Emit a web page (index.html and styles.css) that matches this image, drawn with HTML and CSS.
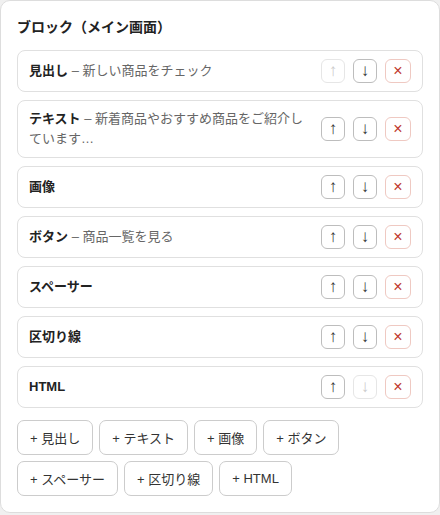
FILE: index.html
```html
<!DOCTYPE html>
<html>
<head>
	<meta charset="utf-8" />
	<title>ブロック</title>
	<link rel="stylesheet" href="styles.css">
</head>
<body>
	<div class="panel">
		<h3 class="panelTitle">ブロック（メイン画面）</h3>

		<div class="blockList">
			<div class="blockRow">
				<div class="blockText"><b>見出し</b><span class="sub"> – 新しい商品をチェック</span></div>
				<div class="actions">
					<button class="act" disabled>↑</button>
					<button class="act">↓</button>
					<button class="act del">×</button>
				</div>
			</div>
			<div class="blockRow">
				<div class="blockText"><b>テキスト</b><span class="sub"> – 新着商品やおすすめ商品をご紹介しています…</span></div>
				<div class="actions">
					<button class="act">↑</button>
					<button class="act">↓</button>
					<button class="act del">×</button>
				</div>
			</div>
			<div class="blockRow">
				<div class="blockText"><b>画像</b></div>
				<div class="actions">
					<button class="act">↑</button>
					<button class="act">↓</button>
					<button class="act del">×</button>
				</div>
			</div>
			<div class="blockRow">
				<div class="blockText"><b>ボタン</b><span class="sub"> – 商品一覧を見る</span></div>
				<div class="actions">
					<button class="act">↑</button>
					<button class="act">↓</button>
					<button class="act del">×</button>
				</div>
			</div>
			<div class="blockRow">
				<div class="blockText"><b>スペーサー</b></div>
				<div class="actions">
					<button class="act">↑</button>
					<button class="act">↓</button>
					<button class="act del">×</button>
				</div>
			</div>
			<div class="blockRow">
				<div class="blockText"><b>区切り線</b></div>
				<div class="actions">
					<button class="act">↑</button>
					<button class="act">↓</button>
					<button class="act del">×</button>
				</div>
			</div>
			<div class="blockRow">
				<div class="blockText"><b>HTML</b></div>
				<div class="actions">
					<button class="act">↑</button>
					<button class="act" disabled>↓</button>
					<button class="act del">×</button>
				</div>
			</div>
		</div>

		<div class="addList">
			<button class="addBtn">+ 見出し</button>
			<button class="addBtn">+ テキスト</button>
			<button class="addBtn">+ 画像</button>
			<button class="addBtn">+ ボタン</button>
			<button class="addBtn">+ スペーサー</button>
			<button class="addBtn">+ 区切り線</button>
			<button class="addBtn">+ HTML</button>
		</div>
	</div>
</body>
</html>
```

FILE: styles.css
```css
*{
	margin: 0;
	padding: 0;
	box-sizing: border-box;
}
body{
	background: #f0f0f0;
	font-family: "Liberation Sans", "Noto Sans CJK JP", sans-serif;
	color: #222222;
}
.panel{
	width: 440px;
	background: #ffffff;
	border: 1px solid #dddddd;
	border-radius: 10px;
	padding: 16px;
}
.panelTitle{
	font-size: 14px;
	font-weight: bold;
	line-height: 21px;
	margin-bottom: 12px;
}
.blockList{
	display: flex;
	flex-direction: column;
	gap: 8px;
}
.blockRow{
	display: flex;
	align-items: center;
	border: 1px solid #e0e0e0;
	border-radius: 8px;
	padding: 8px 11px;
}
.blockText{
	flex: 1;
	font-size: 13px;
	line-height: 20px;
}
.blockText b{
	color: #222222;
}
.blockText .sub{
	color: #666666;
}
.actions{
	display: flex;
	gap: 8px;
	margin-left: 12px;
}
.act{
	width: 24px;
	height: 24px;
	background: #ffffff;
	border: 1px solid #bdbdbd;
	border-radius: 6px;
	color: #333333;
	font-family: "Liberation Sans", sans-serif;
	font-size: 17px;
	line-height: 22px;
	outline: none;
}
.act:disabled{
	border-color: #e6e6e6;
	color: #cccccc;
}
.act.del{
	width: 26px;
	border-color: #efc9c2;
	color: #c0392b;
	font-size: 16px;
}
.addList{
	display: flex;
	flex-wrap: wrap;
	gap: 6px;
	margin-top: 12px;
}
.addBtn{
	height: 35px;
	padding: 0 12px;
	background: #ffffff;
	border: 1px solid #cccccc;
	border-radius: 7px;
	color: #333333;
	font-family: "Liberation Sans", "Noto Sans CJK JP", sans-serif;
	font-size: 13px;
	outline: none;
}
```
